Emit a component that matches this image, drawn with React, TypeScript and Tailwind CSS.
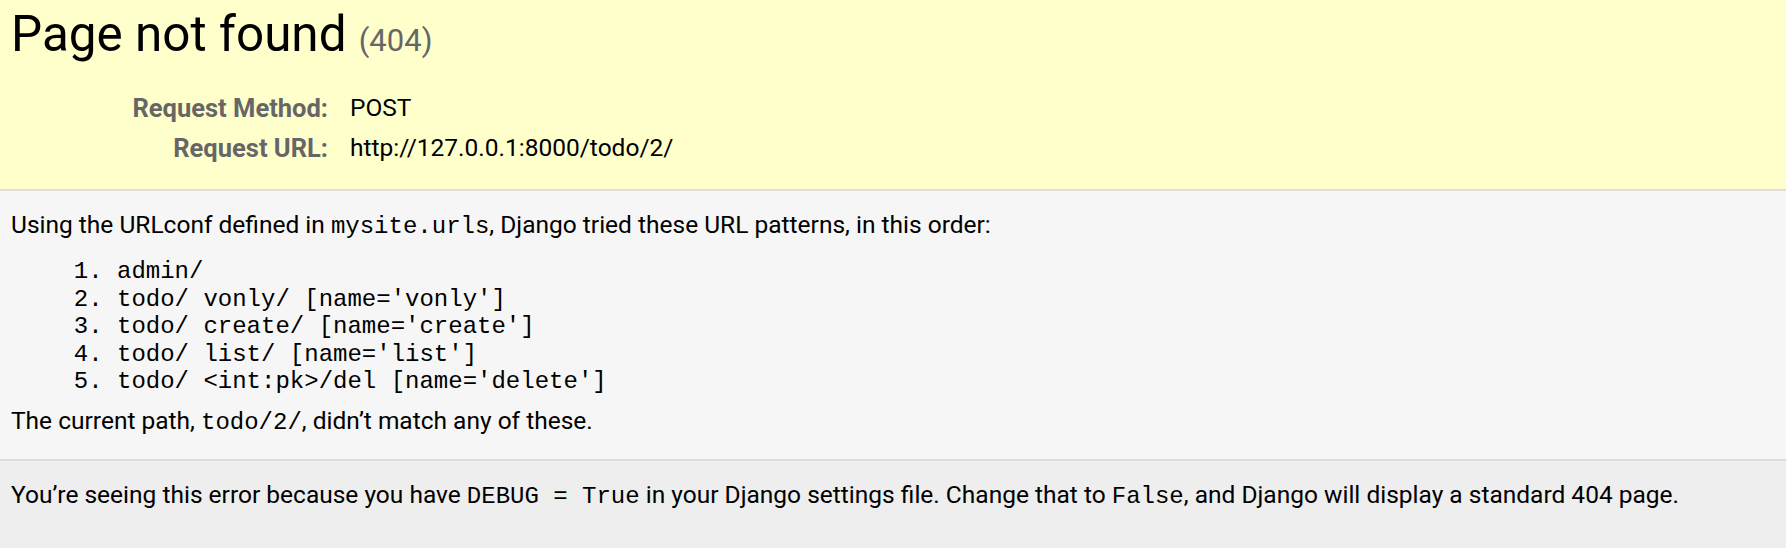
import React from "react";

const patterns = [
  "admin/",
  "todo/ vonly/ [name='vonly']",
  "todo/ create/ [name='create']",
  "todo/ list/ [name='list']",
  "todo/ <int:pk>/del [name='delete']",
];

export default function App() {
  return (
    <div className="min-h-screen bg-[#eeeeee] text-black font-['Roboto',sans-serif] text-[24.5px]">
      <div className="bg-[#ffffcc] border-b-2 border-[#dddddd] pl-[11px] pr-[10px] pt-[6px] pb-[21px]">
        <h1 className="text-[49.4px] leading-[56px] font-normal">
          Page not found <span className="text-[31px] text-[#666666]">(404)</span>
        </h1>
        <div className="mt-[19px] flex flex-col">
          <div className="flex py-[2px] leading-[36px]">
            <div className="w-[329px] shrink-0 pr-[12px] text-right font-bold text-[25.5px] text-[#666666]">Request Method:</div>
            <div className="pl-[10px]">POST</div>
          </div>
          <div className="flex py-[2px] leading-[36px]">
            <div className="w-[329px] shrink-0 pr-[12px] text-right font-bold text-[25.5px] text-[#666666]">Request URL:</div>
            <div className="pl-[10px]">http://127.0.0.1:8000/todo/2/</div>
          </div>
        </div>
      </div>
      <div className="bg-[#f6f6f6] border-b-2 border-[#dddddd] px-[11px] pt-[16px] pb-[20px]">
        <p className="leading-[36px]">
          Using the URLconf defined in{" "}
          <code className="font-['Liberation_Mono',monospace] text-[24px] leading-none">mysite.urls</code>, Django tried
          these URL patterns, in this order:
        </p>
        <ol className="list-decimal list-outside mt-[15px] ml-[106px] font-['Liberation_Mono',monospace] text-[24px] leading-[27.5px]">
          {patterns.map((p) => (
            <li key={p} className="whitespace-pre">{p}</li>
          ))}
        </ol>
        <p className="mt-[7px] leading-[36px]">
          The current path,{" "}
          <code className="font-['Liberation_Mono',monospace] text-[24px] leading-none">todo/2/</code>, didn’t match any
          of these.
        </p>
      </div>
      <div className="bg-[#eeeeee] px-[11px] pt-[16px] pb-[20px]">
        <p className="leading-[36px]">
          You’re seeing this error because you have{" "}
          <code className="font-['Liberation_Mono',monospace] text-[24px] leading-none whitespace-pre">DEBUG = True</code> in
          your Django settings file. Change that to{" "}
          <code className="font-['Liberation_Mono',monospace] text-[24px] leading-none">False</code>, and Django will
          display a standard 404 page.
        </p>
      </div>
    </div>
  );
}
